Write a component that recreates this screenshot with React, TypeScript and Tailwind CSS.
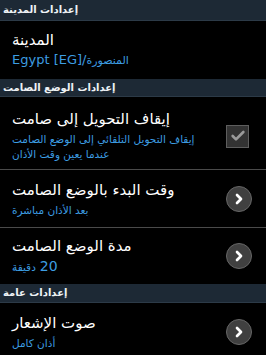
import { Check, ChevronRight } from 'lucide-react'

const font = { fontFamily: '"DejaVu Sans", sans-serif' }

function Header({ label, h }: { label: string; h: string }) {
  return (
    <div className={`${h} bg-[#1d2935] border-b border-[#2c3a47] flex items-center px-[3px]`}>
      <span dir="rtl" className="text-[10px] font-bold text-[#eef2f5] leading-none">
        {label}
      </span>
    </div>
  )
}

function Chevron() {
  return (
    <div className="w-[26px] h-[26px] rounded-full bg-[#404040] border border-[#666] flex items-center justify-center">
      <ChevronRight className="w-[16px] h-[16px] text-white" strokeWidth={4} />
    </div>
  )
}

export default function App() {
  return (
    <div className="w-[266px] h-[355px] bg-black overflow-hidden" style={font}>
      <Header label="إعدادات المدينة" h="h-[21px]" />

      {/* City */}
      <div className="h-[58px] px-3 flex flex-col justify-center gap-[3px]">
        <span dir="rtl" className="text-[15px] text-white leading-[18px] self-start">المدينة</span>
        <div className="flex items-baseline text-[#3d9de2]">
          <span className="text-[13px] leading-[16px]">Egypt [EG]/</span>
          <span className="text-[11px]">المنصورة</span>
        </div>
      </div>

      <Header label="إعدادات الوضع الصامت" h="h-[18px]" />

      {/* Auto silent */}
      <div className="h-[73px] pl-3 pr-[17px] pt-[6px] flex items-center border-b border-[#4a4a4a]">
        <div className="flex-1 flex flex-col items-start gap-[4px]">
          <span dir="rtl" className="text-[15px] text-white leading-[18px]">إيقاف التحويل إلى صامت</span>
          <div className="flex flex-col items-start text-[10.5px] text-[#3d9de2] leading-[15px]">
            <span dir="rtl" className="whitespace-nowrap">إيقاف التحويل التلقائي إلى الوضع الصامت</span>
            <span dir="rtl" className="whitespace-nowrap">عندما يعين وقت الأذان</span>
          </div>
        </div>
        <div className="w-[23px] h-[23px] bg-[#333] border border-[#5e5e5e] flex items-center justify-center">
          <Check className="w-[16px] h-[16px] text-[#9a9a9a]" strokeWidth={4} />
        </div>
      </div>

      {/* Start time */}
      <div className="h-[58px] pl-3 pr-[14px] flex items-center border-b border-[#4a4a4a]">
        <div className="flex-1 flex flex-col items-start gap-[5px]">
          <span dir="rtl" className="text-[15px] text-white leading-[18px]">وقت البدء بالوضع الصامت</span>
          <span dir="rtl" className="text-[10.5px] text-[#3d9de2] leading-[13px]">بعد الأذان مباشرة</span>
        </div>
        <Chevron />
      </div>

      {/* Duration */}
      <div className="h-[56px] pl-3 pr-[14px] flex items-center">
        <div className="flex-1 flex flex-col items-start gap-[3px]">
          <span dir="rtl" className="text-[15px] text-white leading-[18px]">مدة الوضع الصامت</span>
          <div className="flex items-baseline gap-[4px] text-[#3d9de2]">
            <span className="text-[10.5px]">دقيقة</span>
            <span className="text-[14px] leading-[16px]">20</span>
          </div>
        </div>
        <Chevron />
      </div>

      <Header label="إعدادات عامة" h="h-[19px]" />

      {/* Sound */}
      <div className="h-[64px] pl-3 pr-[14px] flex items-center pb-[6px]">
        <div className="flex-1 flex flex-col items-start gap-[5px]">
          <span dir="rtl" className="text-[15px] text-white leading-[18px]">صوت الإشعار</span>
          <span dir="rtl" className="text-[10.5px] text-[#3d9de2] leading-[13px]">أذان كامل</span>
        </div>
        <Chevron />
      </div>
    </div>
  )
}
